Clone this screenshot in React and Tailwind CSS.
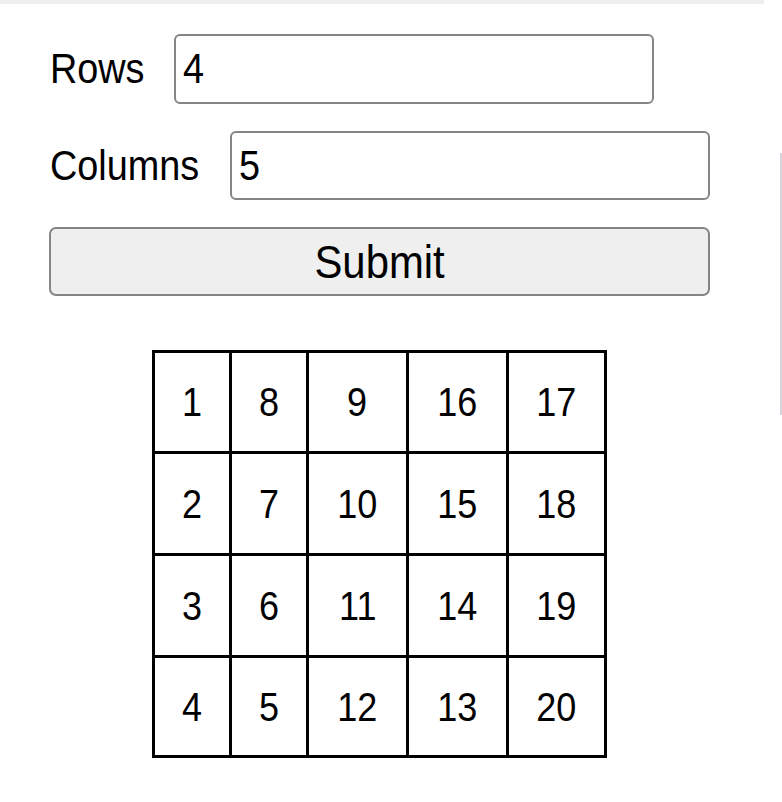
import React from "react";

const grid = [
  [1, 8, 9, 16, 17],
  [2, 7, 10, 15, 18],
  [3, 6, 11, 14, 19],
  [4, 5, 12, 13, 20],
];

export default function App() {
  return (
    <div className="relative w-[782px] h-[802px] bg-white overflow-hidden text-black font-['Liberation_Sans',Arial,sans-serif]">
      <div className="h-[4px] w-[764px] bg-[#efefef]" />
      <div className="absolute right-0 top-[153px] h-[262px] w-[2px] bg-[#d4d4d8]" />
      <div className="pl-[49px] pt-[30px] flex flex-col">
        <div className="flex items-center h-[70px]">
          <span className="w-[95px] ml-px text-[42px] leading-none inline-block scale-x-[0.9] origin-left whitespace-nowrap">Rows</span>
          <div className="ml-[29px] w-[480px] h-[70px] border-2 border-[#858585] rounded-[6px] flex items-center px-[7px]">
            <span className="text-[42px] leading-none inline-block scale-x-[0.9] origin-left">4</span>
          </div>
        </div>
        <div className="flex items-center h-[69px] mt-[27px]">
          <span className="w-[152px] ml-px text-[42px] leading-none inline-block scale-x-[0.9] origin-left whitespace-nowrap">Columns</span>
          <div className="ml-[28px] w-[480px] h-[69px] border-2 border-[#858585] rounded-[6px] flex items-center px-[7px]">
            <span className="text-[42px] leading-none inline-block scale-x-[0.9] origin-left">5</span>
          </div>
        </div>
        <div className="mt-[27px] w-[661px] h-[69px] border-2 border-[#858585] rounded-[7px] bg-[#efefef] flex items-center justify-center">
          <span className="text-[46px] leading-none inline-block scale-x-[0.91]">Submit</span>
        </div>
        <div className="mt-[54px] ml-[103px] w-[455px] grid grid-cols-[74px_74px_97px_97px_95px] grid-rows-[98px_99px_99px_97px] gap-[3px] p-[3px] bg-black">
          {grid.flat().map((n, i) => (
            <div key={i} className="bg-white flex items-center justify-center">
              <span className="text-[40px] leading-none inline-block scale-x-[0.9]">{n}</span>
            </div>
          ))}
        </div>
      </div>
    </div>
  );
}
